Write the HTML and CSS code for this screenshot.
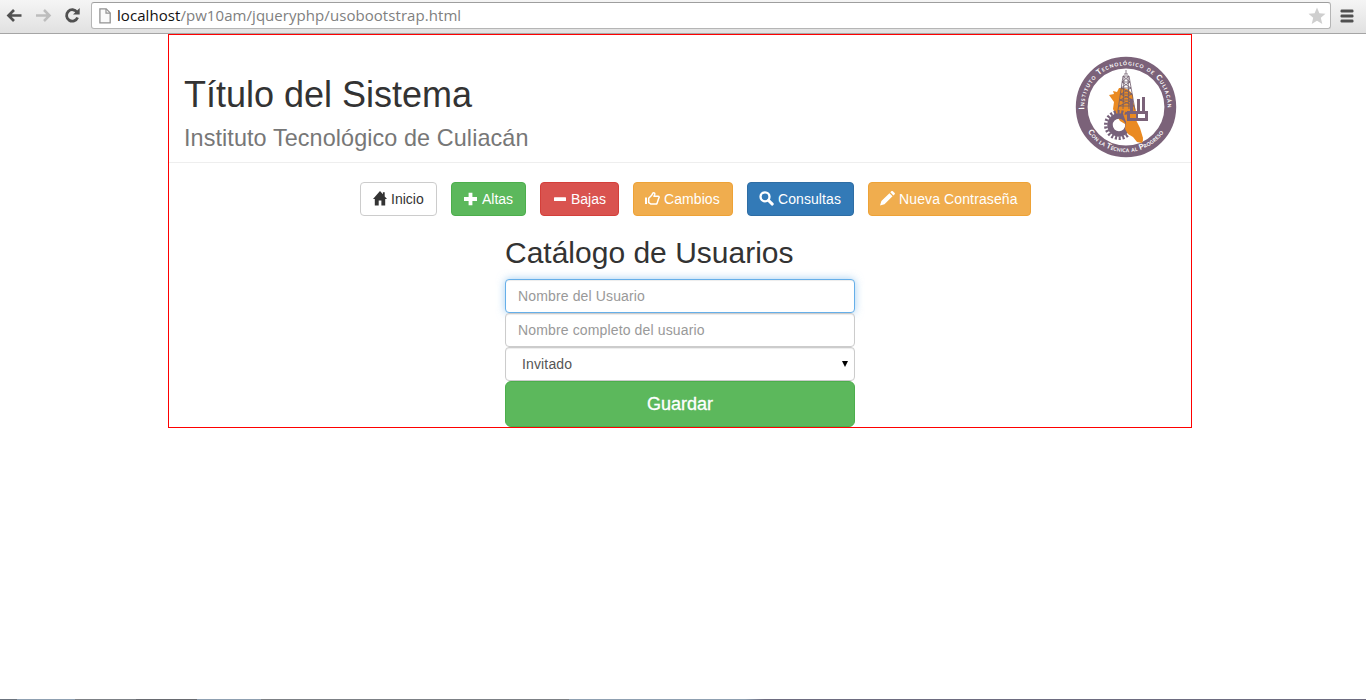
FILE: index.html
```html
<!DOCTYPE html>
<html lang="es">
<head>
<meta charset="utf-8">
<title>Título del Sistema</title>
<link rel="stylesheet" href="styles.css">
</head>
<body>
<div class="window">
  <div class="toolbar">
    <svg class="nav-icons" width="91" height="33" viewBox="0 0 91 33" fill="none">
      <path d="M21.500 15.500H9M14 10l-5.500 5.500L14 21" stroke="#505050" stroke-width="2.700"/>
      <path d="M36 15.500h12.500M44 10l5.500 5.500L44 21" stroke="#bdbdbd" stroke-width="2.500"/>
      <path d="M77 12.200A5.700 5.700 0 1 0 77.600 17.500" stroke="#505050" stroke-width="2.800"/>
      <path d="M79.700 8v6.600H73z" fill="#505050"/>
    </svg>
    <div class="address">
      <svg class="page-icon" width="12" height="16" viewBox="0 0 12 16"><path d="M.9.900h6.300l4 4V14.800H.9z" fill="#fafafa" stroke="#929292" stroke-width="1.300"/><path d="M7 1v4.200h4.200" fill="none" stroke="#929292" stroke-width="1.200"/></svg>
      <span class="url"><b>localhost</b>/pw10am/jqueryphp/usobootstrap.html</span>
      <svg class="star" width="18" height="18" viewBox="0 0 18 18"><path d="M9 .5l2.400 5.800 6.100.5-4.700 4 1.500 6.200L9 13.700 3.700 17l1.500-6.200-4.700-4 6.100-.5z" fill="#cfcfcf"/></svg>
    </div>
    <svg class="menu" width="14" height="14" viewBox="0 0 14 14" fill="#505050"><rect x=".5" y=".500" width="13" height="3" rx="1.200"/><rect x=".5" y="5.500" width="13" height="3" rx="1.200"/><rect x=".5" y="10.500" width="13" height="3" rx="1.200"/></svg>
  </div>

  <main class="system">
    <header class="page-header">
      <h1>Título del Sistema<small>Instituto Tecnológico de Culiacán</small></h1>
      <svg class="logo" width="102" height="102" viewBox="-51 -51 102 102">
        <defs>
          <path id="arc-top" d="M-41.500 4A41.700 41.700 0 1 1 41.500 4"/>
          <path id="arc-bottom" d="M-40.700 20.500A45.900 45.900 0 0 0 40.700 20.500"/>
        </defs>
        <circle r="44.300" fill="#fff" stroke="#7b6279" stroke-width="11.800"/>
        <g class="logo-text" fill="#fff">
          <text><textPath href="#arc-top" startOffset="1.500" textLength="134" lengthAdjust="spacing">Instituto Tecnológico de Culiacán</textPath></text>
          <text><textPath href="#arc-bottom" startOffset="5" textLength="89" lengthAdjust="spacing">Con la Técnica al Progreso</textPath></text>
        </g>
        <path d="M-17-12l5-1-1-3 4 1 2-4 5 0 5 2 4 5 0 6 3 10 0 9 4 8 3 10-1 4-5-1-3-5-6-4-3-8-5-3-4-6-3-6 1-7z" fill="#ea8a22"/>
        <circle cx="-7" cy="18" r="9" fill="none" stroke="#76617a" stroke-width="5.500"/>
        <circle cx="-7" cy="18" r="13.200" fill="none" stroke="#76617a" stroke-width="3.600" stroke-dasharray="2.100 1.670"/>
        <path d="M-3 7l7 2 6 7 4 9 3 8-1 3-5-1-4-5-5-3-3-5 1-7z" fill="#ea8a22"/>
        <path d="M0-37v4M-3-31l-5 34M3-31l6 34M-3-31h6M-4-25h8l-9 6H5l-10 6H6l-12 6H7L-7-1H8M-4-25l9 6M-5-19l11 6M-6-13L7-7M-6-7L8-1M-3-31l7 6M3-31l-7 6M-2-33h4M-2-31l-1 33M2-31l1 33" fill="none" stroke="#6d5a6b" stroke-width=".8"/>
        <path d="M2 4h2v-12h3V4h4v-12h3V4h2v-14h3V4h3v10H1V4z" fill="#7b6279"/>
        <path d="M4 7h6v4H4z" fill="#ea8a22"/><path d="M12 7h7v4h-7z" fill="#fff"/>
      </svg>
    </header>

    <nav class="actions">
      <a class="btn inicio"><svg width="14" height="15" viewBox="0 0 14 15"><path d="M7 0L0 8h1.800v6.400h3.900V9.500h2.700v4.900h3.800V8H14l-2.300-2.600V1.300H9.900v2z"/></svg>Inicio</a>
      <a class="btn altas"><svg width="14" height="14" viewBox="0 0 14 14"><path d="M4.600.8h3.800v4.300H13v3.800H8.400v4.300H4.600V8.900H0V5.100h4.600z"/></svg>Altas</a>
      <a class="btn bajas"><svg width="14" height="14" viewBox="0 0 14 14"><rect x="1" y="5.200" width="12" height="3.800" rx=".5"/></svg>Bajas</a>
      <a class="btn cambios"><svg width="15" height="14" viewBox="0 0 15 14"><path d="M0 5.600h2v6.500H0z"/><path d="M3.700 6.200l3-3L8 .9c1.400-.4 2 .5 1.700 1.500L9 4.300h4c1.300 0 1.400 1 .8 1.800L12 11.400c-.2.500-.5.700-1 .7H6l-2.300-1.400z" fill="none" stroke="currentColor" stroke-width="1.500" stroke-linejoin="round"/></svg>Cambios</a>
      <a class="btn consultas"><svg width="15" height="15" viewBox="0 0 15 15"><circle cx="6" cy="5.800" r="4.500" fill="none" stroke="currentColor" stroke-width="2.300"/><path d="M9.500 9.400l3.800 3.700" fill="none" stroke="currentColor" stroke-width="2.900" stroke-linecap="round"/></svg>Consultas</a>
      <a class="btn contrasena"><svg width="15" height="15" viewBox="0 0 14 14"><path d="M0 13.600l1.300-4.200L8.800 2l2.900 2.900-7.500 7.400zM9.600 1.200L10.800.1q.6-.4 1.200.1l1.700 1.700q.5.600 0 1.200l-1.200 1z"/></svg>Nueva Contraseña</a>
    </nav>

    <form class="catalog">
      <h2>Catálogo de Usuarios</h2>
      <input class="control focused" type="text" placeholder="Nombre del Usuario">
      <input class="control" type="text" placeholder="Nombre completo del usuario">
      <div class="control select">Invitado<svg width="6" height="6" viewBox="0 0 6 6"><path d="M0 0h6L3 6z"/></svg></div>
      <button class="save" type="button">Guardar</button>
    </form>
  </main>
  <div class="taskbar"></div>
</div>
</body>
</html>
```
FILE: styles.css
```css
* { box-sizing: border-box; }
body { margin: 0; background: #fff; color: #333; font: 14px/20px "Liberation Sans", Arial, sans-serif; }
.window { width: 100%; height: 700px; display: flex; flex-direction: column; overflow: hidden; }

/* Browser bar */
.toolbar { height: 34px; flex: none; display: flex; align-items: flex-start; background: linear-gradient(#f5f5f5, #e1e1e1); border-bottom: 1px solid #a5a5a5; }
.nav-icons { flex: none; }
.address { width: 1240px; height: 27px; margin-top: 2px; display: flex; align-items: center; background: #fff; border: 1px solid #b5b5b5; border-top-color: #9e9e9e; border-radius: 3px; padding: 0 4px 0 7px; }
.page-icon { flex: none; margin-right: 6px; }
.url { flex: 1; margin-top: -2px; color: #808080; font: 15px/24px "Open Sans", "Noto Sans", sans-serif; letter-spacing: .06px; white-space: nowrap; }
.url b { color: #111; font-weight: 400; }
.star { flex: none; }
.menu { margin: 9px 0 0 9px; }

/* Page */
.system { width: 1024px; height: 394px; flex: none; margin-left: 168px; border: 1px solid #f00; display: flex; flex-direction: column; }
.page-header { height: 128px; flex: none; display: flex; justify-content: space-between; padding: 21px 14px 0 15px; border-bottom: 1px solid #eee; }
h1 { margin: 19px 0 0; font-size: 36px; line-height: 40px; font-weight: 400; }
h1 small { display: block; font-size: 23.4px; line-height: 36px; letter-spacing: .09px; margin-top: 5px; color: #777; }
.logo { flex: none; }
.logo-text { font: 700 7.6px "Lato", sans-serif; font-variant: small-caps; }

.actions { display: flex; gap: 14px; margin: 19px 0 0 191px; }
.btn { height: 34px; display: flex; align-items: center; gap: 4px; padding: 0 0 0 12px; border: 1px solid; border-radius: 4px; color: #fff; white-space: nowrap; }
.btn svg { flex: none; fill: currentColor; margin-top: -1px; }
.inicio { width: 77px; color: #333; border-color: #ccc; }
.altas { width: 75px; background: #5cb85c; border-color: #4cae4c; }
.bajas { width: 79px; background: #d9534f; border-color: #d43f3a; }
.cambios { width: 100px; padding-left: 11px; letter-spacing: .08px; background: #f0ad4e; border-color: #eea236; }
.consultas { width: 107px; padding-left: 11px; letter-spacing: .08px; background: #337ab7; border-color: #2e6da4; }
.contrasena { width: 163px; padding-left: 11px; letter-spacing: .12px; background: #f0ad4e; border-color: #eea236; }

.catalog { width: 350px; margin: 20px 0 0 336px; display: flex; flex-direction: column; }
h2 { margin: 0 0 10px; font-size: 30px; line-height: 33px; font-weight: 400; }
.control { width: 100%; height: 34px; padding: 6px 12px; border: 1px solid #ccc; border-radius: 4px; background: #fff; color: #555; font: 14px/20px "Liberation Sans", Arial, sans-serif; letter-spacing: .14px; box-shadow: inset 0 1px 1px rgba(0, 0, 0, .075); outline: 0; }
.control::placeholder { color: #999; opacity: 1; }
.focused { border-color: #66afe9; box-shadow: inset 0 1px 1px rgba(0, 0, 0, .075), 0 0 8px rgba(102, 175, 233, .6); }
.select { display: flex; justify-content: space-between; align-items: center; padding: 0 6px 0 16px; }
.save { height: 46px; padding: 0; border: 1px solid #4cae4c; border-radius: 6px; background: #5cb85c; color: #fff; font: 18px/24px "Liberation Sans", Arial, sans-serif; -webkit-text-stroke: .3px #fff; }

.taskbar { height: 1px; flex: none; margin-top: auto; background: linear-gradient(90deg, #6b737d 17px, #8fa0b1 17px 75px, #7c8085 75px 136px, #676a70 136px 197px, #8fa0b1 197px 261px, #7c8085 261px 569px, #8fa0b1 569px 745px, #6d6c80 765px); }
```
